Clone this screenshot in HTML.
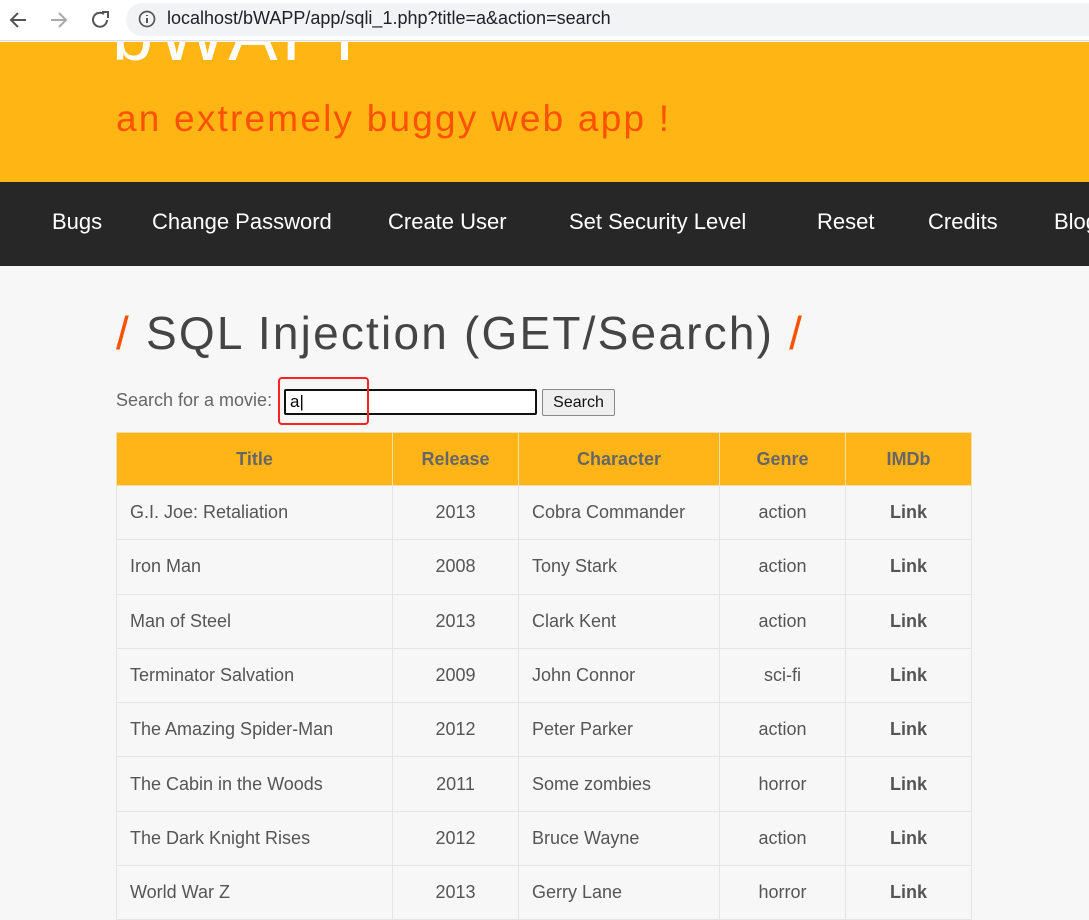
<!DOCTYPE html>
<html><head><meta charset="utf-8"><style>
*{margin:0;padding:0;box-sizing:border-box}
body{width:1089px;height:919px;overflow:hidden;background:#f7f7f7;font-family:"Liberation Sans",sans-serif;position:relative}
.bar{position:absolute;left:0;top:0;width:1089px;height:41px;background:#fff;border-bottom:1px solid #ddd}
.pill{position:absolute;left:126px;top:3px;width:980px;height:33px;border-radius:17px;background:#f1f3f4}
.url{position:absolute;left:167px;top:8px;font-size:18px;color:#202124}
.hdr{position:absolute;left:0;top:42px;width:1089px;height:140px;background:#ffb514}
.logo{position:absolute;left:112px;top:-50px;font-size:74px;color:#fff;letter-spacing:4px}
.tag{position:absolute;left:116px;top:56px;font-size:37px;color:#ff5200;font-weight:300;letter-spacing:2.2px}
.nav{position:absolute;left:0;top:182px;width:1089px;height:84px;background:#272727}
.nav span{position:absolute;top:27px;color:#fff;font-size:22px}
h1{position:absolute;left:116px;top:306px;font-size:46px;font-weight:normal;color:#444;white-space:nowrap;letter-spacing:2.2px}
h1 b{color:#ff5200;font-weight:normal}
.lbl{position:absolute;left:116px;top:390px;font-size:18px;color:#666}
.inp{position:absolute;left:284px;top:389px;width:253px;height:26px;border:2px solid #111;border-radius:2px;background:#fff;font-size:17px;padding-left:4px;line-height:22px}
.red{position:absolute;left:278px;top:377px;width:91px;height:48px;border:2px solid #f22;border-radius:4px}
.btn{position:absolute;left:542px;top:389px;width:73px;height:27px;border:1px solid #888;border-radius:2px;background:#efefef;font-size:16px;text-align:center;line-height:25px;color:#111}
table{position:absolute;left:116px;top:432px;border-collapse:collapse;width:856px;font-size:18px;color:#555}
th{background:#ffb518;height:53px;color:#666;font-weight:bold;border:1px solid #f0e0b0}
td{height:54.3px;border:1px solid #e4e4e4;text-align:center}
td:first-child,td:nth-child(3){text-align:left;padding-left:13px}
td:last-child{font-weight:bold}
</style></head><body>
<div class="bar"><div class="pill"></div>
<svg style="position:absolute;left:8px;top:9px" width="110" height="22" viewBox="0 0 110 22" fill="none" stroke-width="2">
<path d="M18 11H3M10 4L3 11l7 7" stroke="#555"/><path d="M43 11h15M51 4l7 7-7 7" stroke="#aaa"/>
<path d="M96 5a7 7 0 1 0 3 6" stroke="#555"/><path d="M94 3h6v6" stroke="#555"/></svg>
<svg style="position:absolute;left:138px;top:10px" width="18" height="18"><circle cx="9" cy="9" r="7.5" fill="none" stroke="#555" stroke-width="1.7"/><path d="M9 8v5M9 5v1" stroke="#555" stroke-width="2"/></svg>
<div class="url">localhost/bWAPP/app/sqli_1.php?title=a&amp;action=search</div></div>
<div class="hdr" style="overflow:hidden"><div class="logo">bWAPP</div><div class="tag">an extremely buggy web app !</div></div>
<div class="nav"><span style="left:52px">Bugs</span><span style="left:152px">Change Password</span><span style="left:388px">Create User</span><span style="left:569px">Set Security Level</span><span style="left:817px">Reset</span><span style="left:928px">Credits</span><span style="left:1054px">Blog</span></div>
<h1><b>/</b> SQL Injection (GET/Search) <b>/</b></h1>
<div class="lbl">Search for a movie:</div>
<div class="inp">a|</div><div class="red"></div><div class="btn">Search</div>
<table>
<tr><th style="width:276px">Title</th><th style="width:126px">Release</th><th style="width:201px">Character</th><th style="width:126px">Genre</th><th>IMDb</th></tr>
<tr><td>G.I. Joe: Retaliation</td><td>2013</td><td>Cobra Commander</td><td>action</td><td>Link</td></tr>
<tr><td>Iron Man</td><td>2008</td><td>Tony Stark</td><td>action</td><td>Link</td></tr>
<tr><td>Man of Steel</td><td>2013</td><td>Clark Kent</td><td>action</td><td>Link</td></tr>
<tr><td>Terminator Salvation</td><td>2009</td><td>John Connor</td><td>sci-fi</td><td>Link</td></tr>
<tr><td>The Amazing Spider-Man</td><td>2012</td><td>Peter Parker</td><td>action</td><td>Link</td></tr>
<tr><td>The Cabin in the Woods</td><td>2011</td><td>Some zombies</td><td>horror</td><td>Link</td></tr>
<tr><td>The Dark Knight Rises</td><td>2012</td><td>Bruce Wayne</td><td>action</td><td>Link</td></tr>
<tr><td>World War Z</td><td>2013</td><td>Gerry Lane</td><td>horror</td><td>Link</td></tr>
</table>
</body></html>
